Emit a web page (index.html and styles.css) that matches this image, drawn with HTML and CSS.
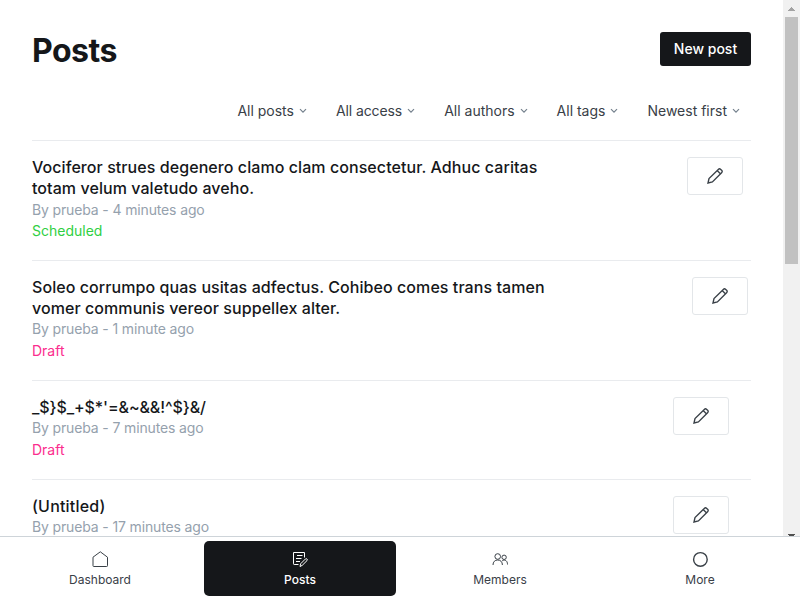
FILE: index.html
```html
<!DOCTYPE html>
<html lang="en">
<head>
<meta charset="utf-8">
<title>Posts</title>
<link rel="stylesheet" href="styles.css">
</head>
<body>
<svg class="defs" width="0" height="0">
  <symbol id="pencil" viewBox="0 0 16 16"><path d="M1 15l1-4.4 9.3-9.2a1.7 1.7 0 0 1 2.4 0l.9.9a1.7 1.7 0 0 1 0 2.4L5.4 14zM10.2 2.5l3.4 3.4"/></symbol>
  <symbol id="chevron" viewBox="0 0 8 6"><path d="M1 1.2l3 3 3-3"/></symbol>
</svg>
<div class="viewport">
  <main class="content">
    <header class="header">
      <h1 class="title">Posts</h1>
      <a class="new-post">New post</a>
    </header>
    <div class="filters">
      <div class="filter"><span>All posts</span><svg class="chevron"><use href="#chevron"/></svg></div>
      <div class="filter access"><span>All access</span><svg class="chevron"><use href="#chevron"/></svg></div>
      <div class="filter"><span>All authors</span><svg class="chevron"><use href="#chevron"/></svg></div>
      <div class="filter"><span>All tags</span><svg class="chevron"><use href="#chevron"/></svg></div>
      <div class="filter"><span>Newest first</span><svg class="chevron"><use href="#chevron"/></svg></div>
    </div>
    <ol class="list">
      <li class="row row-scheduled">
        <div class="info">
          <h3 class="post-title">Vociferor strues degenero clamo clam consectetur. Adhuc caritas<br>totam velum valetudo aveho.</h3>
          <p class="meta">By prueba - 4 minutes ago</p>
          <p class="status scheduled">Scheduled</p>
        </div>
        <a class="edit"><svg class="pencil"><use href="#pencil"/></svg></a>
      </li>
      <li class="row row-recent">
        <div class="info">
          <h3 class="post-title">Soleo corrumpo quas usitas adfectus. Cohibeo comes trans tamen<br>vomer communis vereor suppellex alter.</h3>
          <p class="meta">By prueba - 1 minute ago</p>
          <p class="status draft">Draft</p>
        </div>
        <a class="edit"><svg class="pencil"><use href="#pencil"/></svg></a>
      </li>
      <li class="row">
        <div class="info">
          <h3 class="post-title symbols">_$}$_+$*'=&amp;~&amp;&amp;!^$}&amp;/</h3>
          <p class="meta">By prueba - 7 minutes ago</p>
          <p class="status draft">Draft</p>
        </div>
        <a class="edit"><svg class="pencil"><use href="#pencil"/></svg></a>
      </li>
      <li class="row">
        <div class="info">
          <h3 class="post-title untitled">(Untitled)</h3>
          <p class="meta">By prueba - 17 minutes ago</p>
        </div>
        <a class="edit"><svg class="pencil"><use href="#pencil"/></svg></a>
      </li>
    </ol>
  </main>
  <div class="scrollbar">
    <svg class="arrow" viewBox="0 0 17 17"><path fill="#a3a3a3" d="M8 7h1v1h1v1h1v1h1v1H5v-1h1V9h1V8h1z"/></svg>
    <div class="thumb"></div>
    <svg class="arrow-down" viewBox="0 0 17 2"><path fill="#505050" d="M5 0h7v1h-1v1H6V1H5z"/></svg>
  </div>
</div>
<nav class="nav">
  <a class="nav-item">
    <svg class="nav-icon" viewBox="0 0 16 16"><path d="M1 6.2L8.3.8l7.2 5.4v8.5q0 .8-.8.8H1.8q-.8 0-.8-.8z"/></svg>
    <span>Dashboard</span>
  </a>
  <a class="nav-item active">
    <svg class="nav-icon" viewBox="0 0 16 16"><path d="M6.5 13.5H2.2q-.7 0-.7-.7V1.5h11v5M5 4.5h5.5M4 7.5h5.5M4 10.5h4M8 15.5l.6-2.7 4.8-4.8q.8-.8 1.6 0t0 1.6l-4.8 4.8z"/></svg>
    <span>Posts</span>
  </a>
  <a class="nav-item">
    <svg class="nav-icon" viewBox="0 0 16 16"><circle cx="5.7" cy="5.5" r="2.8"/><circle cx="12.1" cy="6.3" r="2.2"/><path d="M1 14c0-3.2 1.9-5 4.7-5s4.7 1.8 4.7 5M10.2 9.8c3-1.8 5.3.1 5.3 3.7"/></svg>
    <span>Members</span>
  </a>
  <a class="nav-item more">
    <svg class="nav-icon" viewBox="0 0 16 16"><circle cx="8.4" cy="8.4" r="6.8"/></svg>
    <span>More</span>
  </a>
</nav>
</body>
</html>
```
FILE: styles.css
```css
* { box-sizing: border-box; margin: 0; padding: 0; }
body { width: 800px; height: 600px; overflow: hidden; display: flex; flex-direction: column; background: #fff; color: #15171a; font-family: Inter, "Liberation Sans", sans-serif; }
svg { fill: none; stroke: currentColor; display: block; }
.defs { position: absolute; }
.viewport { height: 536px; display: flex; overflow: hidden; }
.content { flex: 1; padding: 32px 32px 0; }
.header { display: flex; justify-content: space-between; align-items: flex-start; height: 62px; }
.title { font-size: 32px; line-height: 37px; font-weight: 700; letter-spacing: -.5px; }
.new-post { width: 91px; height: 34px; border-radius: 3px; background: #15171a; color: #fff; font-size: 14px; line-height: 34px; font-weight: 550; text-align: center; }
.filters { display: flex; justify-content: flex-end; align-items: flex-start; height: 46px; padding: 7px 11px 0 0; gap: 29px; color: #394047; font-size: 14px; line-height: 20px; }
.filter { display: flex; align-items: center; gap: 5px; white-space: nowrap; }
.access { letter-spacing: -.1px; }
.chevron { width: 8px; height: 6px; color: #74808d; stroke-width: 1.2; }
.list { list-style: none; }
.row { display: flex; justify-content: space-between; border-top: 1px solid #e9ebee; padding: 16px 22px 0 0; height: 99px; }
.row-scheduled { height: 120px; padding-right: 8px; }
.row-recent { height: 120px; padding-right: 3px; }
.post-title { font-size: 16px; line-height: 21px; font-weight: 550; letter-spacing: .07px; white-space: nowrap; }
.symbols { letter-spacing: -.1px; }
.untitled { letter-spacing: .2px; }
.meta, .status { font-size: 14px; line-height: 20px; color: #95a1ad; }
.meta { letter-spacing: -.14px; }
.row-scheduled .meta { line-height: 22px; }
.row .draft { line-height: 24px; }
.status.scheduled { color: #30cf43; }
.status.draft { color: #fb2d8d; }
.edit { width: 56px; height: 38px; border: 1px solid #e3e6e9; border-radius: 3px; display: flex; align-items: center; justify-content: center; color: #394047; }
.pencil { width: 16px; height: 16px; stroke-width: 1.35; }
.scrollbar { width: 17px; background: #f1f1f1; display: flex; flex-direction: column; align-items: center; }
.arrow { width: 17px; height: 17px; stroke: none; }
.thumb { width: 13px; height: 247px; background: #c1c1c1; }
.arrow-down { width: 17px; height: 2px; stroke: none; margin-top: auto; }
.nav { height: 64px; border-top: 1px solid #ced4d9; display: grid; grid-template-columns: repeat(4, 1fr); padding: 4px 0; }
.nav-item { margin: 0 4px; height: 55px; border-radius: 5px; display: flex; flex-direction: column; align-items: center; padding-top: 10px; gap: 4px; color: #394047; font-size: 12px; line-height: 17px; }
.nav-icon { width: 16px; height: 16px; }
.active { background: #15171a; color: #fff; font-weight: 550; }
.more .nav-icon { stroke-width: 1.4; }
```
